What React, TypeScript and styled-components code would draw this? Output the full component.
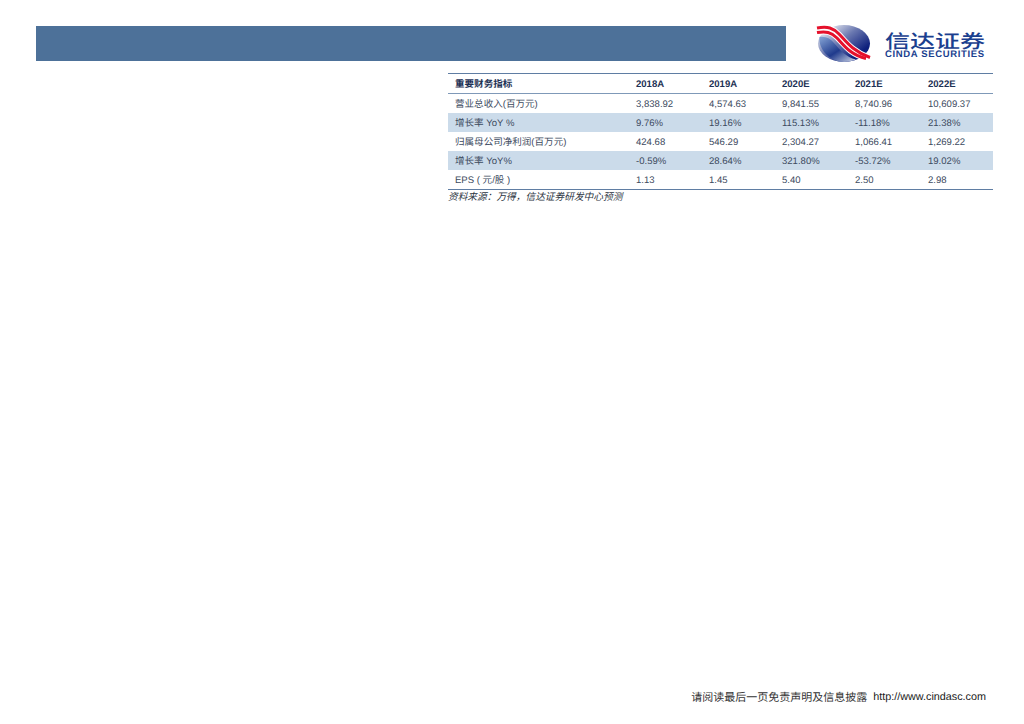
import React from 'react';
import styled, { createGlobalStyle } from 'styled-components';

const GlobalStyle = createGlobalStyle`
  html, body {
    margin: 0;
    padding: 0;
    background: #fff;
    overflow: hidden;
    text-rendering: geometricPrecision;
  }
`;

const sansStack = `"Liberation Sans", "Noto Sans CJK SC", sans-serif`;

const Page = styled.div`
  width: 1024px;
  height: 724px;
  box-sizing: border-box;
  padding: 24px 38px 20px 36px;
  display: flex;
  flex-direction: column;
  font-family: ${sansStack};
`;

const Header = styled.header`
  display: flex;
  align-items: flex-start;
  height: 40px;
`;

const Banner = styled.div`
  width: 750px;
  height: 35px;
  margin-top: 2px;
  background: #4d7199;
`;

const LogoWrap = styled.div`
  display: flex;
  margin-left: 30px;
  width: 170px;
`;

const LogoText = styled.div`
  display: flex;
  flex-direction: column;
  margin-left: 13px;
  color: #1b3f8f;
`;

const LogoCn = styled.span`
  display: block;
  font-family: "Noto Sans CJK SC", sans-serif;
  font-size: 25px;
  line-height: 20px;
  font-weight: 500;
  margin-top: 6px;
  white-space: nowrap;
  transform: scaleY(0.75);
`;

const LogoEn = styled.span`
  font-size: 9.5px;
  line-height: 9px;
  font-weight: 700;
  letter-spacing: 0.65px;
  white-space: nowrap;
`;

const TableBlock = styled.section`
  margin: 9px 0 0 412px;
  width: 545px;
`;

const DataTable = styled.table`
  width: 545px;
  table-layout: fixed;
  border-collapse: collapse;
  font-size: 9.55px;
  line-height: 14px;
  color: #3c4a5e;
  border-top: 1.5px solid #5f7da3;
  border-bottom: 1.5px solid #5f7da3;
`;

const HeadRow = styled.tr`
  height: 20px;
  border-bottom: 1.5px solid #7f99b8;
`;

const HeadCell = styled.th`
  padding: 2px 0 0 7px;
  text-align: left;
  font-weight: 700;
  color: #1d3154;
`;

const BodyRow = styled.tr<{ $shaded: boolean }>`
  height: 19px;
  background: ${({ $shaded }) => ($shaded ? '#cbdbea' : '#fff')};

  &:last-child {
    height: 20px;
  }
`;

const BodyCell = styled.td`
  padding: 3px 0 0 7px;
  white-space: nowrap;
`;

const SourceNote = styled.p`
  margin: 0;
  font-family: "Noto Sans CJK SC", sans-serif;
  font-size: 9.7px;
  line-height: 13px;
  font-style: italic;
  color: #2b3340;
  white-space: nowrap;
`;

const Footer = styled.footer`
  margin-top: auto;
  display: flex;
  justify-content: flex-end;
  align-items: center;
  gap: 6px;
  font-size: 10.8px;
  line-height: 14px;
  color: #1a1a1a;
`;

const FooterCn = styled.span`
  font-family: "Noto Sans CJK SC", sans-serif;
  font-size: 11px;
  color: #333;
`;

const years = ['2018A', '2019A', '2020E', '2021E', '2022E'];

const rows = [
  { label: '营业总收入(百万元)', values: ['3,838.92', '4,574.63', '9,841.55', '8,740.96', '10,609.37'] },
  { label: '增长率 YoY %', values: ['9.76%', '19.16%', '115.13%', '-11.18%', '21.38%'] },
  { label: '归属母公司净利润(百万元)', values: ['424.68', '546.29', '2,304.27', '1,066.41', '1,269.22'] },
  { label: '增长率 YoY%', values: ['-0.59%', '28.64%', '321.80%', '-53.72%', '19.02%'] },
  { label: 'EPS ( 元/股 )', values: ['1.13', '1.45', '5.40', '2.50', '2.98'] },
];

const ribbonTop = 'M1 4C12 2 17 4 23 10S36 27 54 33.5';
const ribbonLow = 'M1 8.5C10 7 15 8 21 14S34 31 50 34.5';

const LogoMark = () => (
  <svg width="56" height="40" viewBox="0 0 56 40">
    <defs>
      <linearGradient id="globeTop" x1="0.3" y1="0" x2="0.95" y2="0.6">
        <stop offset="0" stopColor="#d8dcea" />
        <stop offset="0.45" stopColor="#6a78b0" />
        <stop offset="1" stopColor="#0d1f7c" />
      </linearGradient>
      <linearGradient id="globeLow" x1="0" y1="0.1" x2="0.85" y2="1">
        <stop offset="0" stopColor="#7d9bcf" />
        <stop offset="0.55" stopColor="#1f3a8c" />
        <stop offset="1" stopColor="#b9c3dc" />
      </linearGradient>
    </defs>
    <ellipse cx="28" cy="19.5" rx="26" ry="18.5" fill="url(#globeTop)" />
    <path d="M3.5 13C2 25 14 38 28 38c4 0 8-.8 12-2.4C30 33 24 26 18 19 14 14 9 12 3.5 13z" fill="url(#globeLow)" />
    <path d={ribbonTop} fill="none" stroke="#fff" strokeWidth="5" />
    <path d={ribbonLow} fill="none" stroke="#fff" strokeWidth="5" />
    <path d={ribbonTop} fill="none" stroke="#e5112c" strokeWidth="3" />
    <path d={ribbonLow} fill="none" stroke="#e5112c" strokeWidth="3" />
  </svg>
);

export default function App() {
  return (
    <Page>
      <GlobalStyle />
      <Header>
        <Banner />
        <LogoWrap>
          <LogoMark />
          <LogoText>
            <LogoCn>信达证券</LogoCn>
            <LogoEn>CINDA SECURITIES</LogoEn>
          </LogoText>
        </LogoWrap>
      </Header>
      <TableBlock>
        <DataTable>
          <colgroup>
            <col width="181" />
            <col width="73" />
            <col width="73" />
            <col width="73" />
            <col width="73" />
            <col width="72" />
          </colgroup>
          <thead>
            <HeadRow>
              <HeadCell>重要财务指标</HeadCell>
              {years.map((y) => (
                <HeadCell key={y}>{y}</HeadCell>
              ))}
            </HeadRow>
          </thead>
          <tbody>
            {rows.map((row, i) => (
              <BodyRow key={row.label} $shaded={i % 2 === 1}>
                <BodyCell>{row.label}</BodyCell>
                {row.values.map((v) => (
                  <BodyCell key={v}>{v}</BodyCell>
                ))}
              </BodyRow>
            ))}
          </tbody>
        </DataTable>
        <SourceNote>资料来源：万得，信达证券研发中心预测</SourceNote>
      </TableBlock>
      <Footer>
        <FooterCn>请阅读最后一页免责声明及信息披露</FooterCn>
        <span>http://www.cindasc.com</span>
      </Footer>
    </Page>
  );
}
